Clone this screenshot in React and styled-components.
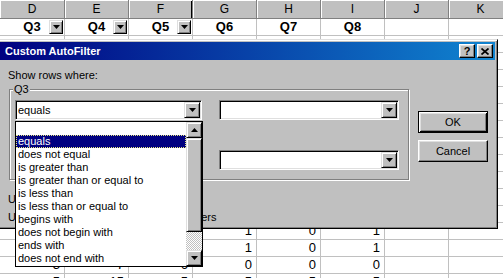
import React from "react";
import styled, { createGlobalStyle } from "styled-components";

const GlobalStyle = createGlobalStyle`
  html, body {
    margin: 0;
    padding: 0;
    background: #fff;
    overflow: hidden;
  }
  body {
    font-family: "Liberation Sans", Arial, sans-serif;
  }
`;

const Screen = styled.div`
  position: relative;
  width: 503px;
  height: 278px;
  overflow: hidden;
  background: #fff;
`;

/* ---------- worksheet ---------- */

const Sheet = styled.div`
  display: flex;
  flex-direction: column;
`;

const Row = styled.div`
  display: flex;
`;

const HeaderCell = styled.div`
  flex: 0 0 ${({ w }) => w}px;
  box-sizing: border-box;
  height: 19px;
  line-height: 18px;
  text-align: center;
  font-size: 12px;
  color: #000;
  background: #c0c0c0;
  border-right: 1px solid #808080;
  border-bottom: 1px solid #808080;
  box-shadow: ${({ active }) =>
    active ? "inset 1px 1px #fff, inset -1px 0 #000" : "inset 1px 1px #fff"};
`;

const Cell = styled.div`
  position: relative;
  flex: 0 0 ${({ w }) => w}px;
  box-sizing: border-box;
  height: 17px;
  line-height: 16px;
  padding: 0 4px;
  font-size: 13px;
  font-weight: ${({ bold }) => (bold ? 700 : 400)};
  text-align: ${({ align }) => align || "right"};
  color: #000;
  border-right: 1px solid #c0c0c0;
  border-bottom: 1px solid #c0c0c0;
  overflow: hidden;
  white-space: nowrap;
`;

const FilterButton = styled.div`
  position: absolute;
  right: 1px;
  top: 1px;
  width: 14px;
  height: 14px;
  box-sizing: border-box;
  display: flex;
  align-items: center;
  justify-content: center;
  background: #c0c0c0;
  border: 1px solid;
  border-color: #dfdfdf #000 #000 #dfdfdf;
  box-shadow: inset 1px 1px #fff, inset -1px -1px #808080;
`;

/* ---------- dialog ---------- */

const Dialog = styled.div`
  position: absolute;
  left: -3px;
  top: 39px;
  width: 501px;
  height: 190px;
  box-sizing: border-box;
  padding: 2px;
  background: #c0c0c0;
  border: 1px solid;
  border-color: #dfdfdf #000 #000 #dfdfdf;
  box-shadow: inset 1px 1px #fff, inset -1px -1px #808080;
  display: flex;
  flex-direction: column;
  font-size: 11px;
  color: #000;
`;

const TitleBar = styled.div`
  height: 18px;
  flex: 0 0 18px;
  display: flex;
  align-items: center;
  justify-content: space-between;
  padding: 0 2px 0 5px;
  background: linear-gradient(to right, #000080, #1084d0);
`;

const Title = styled.div`
  color: #fff;
  font-weight: 700;
  font-size: 11px;
`;

const TitleButtons = styled.div`
  display: flex;
  gap: 2px;
`;

const TitleButton = styled.div`
  width: 16px;
  height: 14px;
  box-sizing: border-box;
  display: flex;
  align-items: center;
  justify-content: center;
  background: #c0c0c0;
  border: 1px solid;
  border-color: #fff #000 #000 #fff;
  box-shadow: inset -1px -1px #808080, inset 1px 1px #dfdfdf;
  font-weight: 700;
  font-size: 11px;
  line-height: 12px;
`;

const Body = styled.div`
  flex: 1;
  display: flex;
  flex-direction: column;
  overflow: hidden;
`;

const Prompt = styled.div`
  margin: 9px 0 0 8px;
  line-height: 13px;
`;

const MainRow = styled.div`
  display: flex;
  align-items: flex-start;
  margin-top: 7px;
  padding-left: 9px;
`;

const GroupBox = styled.div`
  width: 400px;
  box-sizing: border-box;
  display: flex;
  flex-direction: column;
  align-items: flex-start;
  padding: 0 9px 9px 5px;
  border: 1px solid #808080;
  box-shadow: inset 1px 1px #fff, 1px 1px #fff;
`;

const Legend = styled.div`
  margin: -7px 0 0 -2px;
  padding: 0 1px;
  line-height: 13px;
  background: #c0c0c0;
`;

const CriteriaGrid = styled.div`
  margin-top: 4px;
  display: grid;
  grid-template-columns: 187px 180px;
  grid-template-rows: 20px 30px 20px;
  column-gap: 17px;
`;

const Combo = styled.div`
  box-sizing: border-box;
  height: 20px;
  display: flex;
  padding: 1px;
  background: #fff;
  border: 1px solid;
  border-color: #808080 #fff #fff #808080;
  box-shadow: inset 1px 1px #000, inset -1px -1px #dfdfdf;
`;

const ComboText = styled.div`
  flex: 1;
  padding-left: 1px;
  line-height: 16px;
  white-space: nowrap;
`;

const BevelButton = styled.div`
  flex: 0 0 16px;
  width: 16px;
  height: ${({ h }) => h || 16}px;
  box-sizing: border-box;
  display: flex;
  align-items: center;
  justify-content: center;
  background: #c0c0c0;
  border: 1px solid;
  border-color: #dfdfdf #000 #000 #dfdfdf;
  box-shadow: inset 1px 1px #fff, inset -1px -1px #808080;
`;

const RadioRow = styled.div`
  display: flex;
  align-items: center;
  gap: 28px;
  padding-left: 30px;
`;

const Radio = styled.label`
  display: flex;
  align-items: center;
  gap: 4px;
  &::before {
    content: "";
    width: 10px;
    height: 10px;
    border-radius: 50%;
    background: ${({ checked }) =>
      checked ? "radial-gradient(circle, #000 2px, #fff 2.5px)" : "#fff"};
    border: 1px solid #808080;
  }
`;

const ButtonCol = styled.div`
  display: flex;
  flex-direction: column;
  gap: 7px;
  margin: 22px 0 0 9px;
`;

const PushButton = styled.div`
  width: 70px;
  height: 22px;
  box-sizing: border-box;
  display: flex;
  align-items: center;
  justify-content: center;
  background: #c0c0c0;
  border: 1px solid;
  border-color: ${({ primary }) =>
    primary ? "#000" : "#fff #000 #000 #fff"};
  box-shadow: ${({ primary }) =>
    primary
      ? "inset 1px 1px #fff, inset -1px -1px #000, inset 2px 2px #dfdfdf, inset -2px -2px #808080"
      : "inset -1px -1px #808080, inset 1px 1px #dfdfdf"};
`;

const Notes = styled.div`
  margin: 10px 0 0 8px;
  line-height: 18px;
  white-space: nowrap;
`;

/* ---------- open drop-down list ---------- */

const DropList = styled.div`
  position: absolute;
  left: 15px;
  top: 121px;
  width: 188px;
  height: 146px;
  box-sizing: border-box;
  display: flex;
  background: #fff;
  border: 1px solid #000;
  font-size: 11px;
  color: #000;
`;

const Items = styled.div`
  flex: 1;
  display: flex;
  flex-direction: column;
`;

const Item = styled.div`
  height: 13px;
  line-height: 13px;
  padding-left: 2px;
  white-space: nowrap;
  background: ${({ selected }) => (selected ? "#000080" : "transparent")};
  color: ${({ selected }) => (selected ? "#fff" : "#000")};
  outline: ${({ selected }) => (selected ? "1px dotted #e8e880" : "none")};
  outline-offset: -1px;
`;

const ScrollBar = styled.div`
  flex: 0 0 16px;
  display: flex;
  flex-direction: column;
`;

const Thumb = styled.div`
  height: 94px;
  box-sizing: border-box;
  background: #c0c0c0;
  border: 1px solid;
  border-color: #dfdfdf #000 #000 #dfdfdf;
  box-shadow: inset 1px 1px #fff, inset -1px -1px #808080;
`;

const Track = styled.div`
  flex: 1;
  background-color: #c0c0c0;
  background-image: conic-gradient(#fff 25%, #c0c0c0 0 50%, #fff 0 75%, #c0c0c0 0);
  background-size: 2px 2px;
`;

const Arrow = ({ up }) => (
  <svg width="7" height="4" viewBox="0 0 7 4">
    <polygon points={up ? "3.5,0 7,4 0,4" : "0,0 7,0 3.5,4"} fill="#000" />
  </svg>
);

const CloseGlyph = () => (
  <svg width="8" height="7" viewBox="0 0 8 7">
    <path d="M0.5 0.5L7.5 6.5M7.5 0.5L0.5 6.5" stroke="#000" strokeWidth="1.7" />
  </svg>
);

const COLS = [
  { key: "D", w: 65 },
  { key: "E", w: 64 },
  { key: "F", w: 64 },
  { key: "G", w: 64 },
  { key: "H", w: 64 },
  { key: "I", w: 64 },
  { key: "J", w: 64 },
  { key: "K", w: 64 },
];

const LABELS = ["Q3", "Q4", "Q5", "Q6", "Q7", "Q8", "", ""];

const DATA = [
  [4, 12, 6, 1, 0, 1],
  [2, 9, 4, 0, 1, 0],
  [6, 14, 7, 1, 1, 1],
  [3, 8, 5, 0, 0, 1],
  [5, 11, 6, 1, 0, 0],
  [1, 6, 3, 0, 0, 0],
  [4, 10, 5, 1, 1, 0],
  [7, 16, 8, 1, 0, 1],
  [2, 5, 4, 0, 1, 1],
  [6, 13, 7, 1, 0, 0],
  [3, 9, 6, 0, 0, 1],
  [5, 12, 6, 1, 0, 1],
  [4, 10, 5, 1, 0, 1],
  [3, 7, 6, 0, 0, 0],
  [5, 15, 5, 5, 5, 5],
];

const OPERATORS = [
  "",
  "equals",
  "does not equal",
  "is greater than",
  "is greater than or equal to",
  "is less than",
  "is less than or equal to",
  "begins with",
  "does not begin with",
  "ends with",
  "does not end with",
];

export default () => {
  return (
    <Screen>
      <GlobalStyle />

      <Sheet>
        <Row>
          {COLS.map(({ key, w }) => (
            <HeaderCell key={key} w={w} active={key === "F"}>
              {key}
            </HeaderCell>
          ))}
        </Row>
        <Row>
          {COLS.map(({ key, w }, idx) => (
            <Cell key={key} w={w} bold align="center">
              {LABELS[idx]}
              {idx < 3 && (
                <FilterButton>
                  <Arrow />
                </FilterButton>
              )}
            </Cell>
          ))}
        </Row>
        {DATA.map((values, r) => (
          <Row key={r}>
            {COLS.map(({ key, w }, idx) => (
              <Cell key={key} w={w}>
                {values[idx]}
              </Cell>
            ))}
          </Row>
        ))}
      </Sheet>

      <Dialog>
        <TitleBar>
          <Title>Custom AutoFilter</Title>
          <TitleButtons>
            <TitleButton>?</TitleButton>
            <TitleButton>
              <CloseGlyph />
            </TitleButton>
          </TitleButtons>
        </TitleBar>

        <Body>
          <Prompt>Show rows where:</Prompt>
          <MainRow>
            <GroupBox>
              <Legend>Q3</Legend>
              <CriteriaGrid>
                <Combo>
                  <ComboText>equals</ComboText>
                  <BevelButton>
                    <Arrow />
                  </BevelButton>
                </Combo>
                <Combo>
                  <ComboText />
                  <BevelButton>
                    <Arrow />
                  </BevelButton>
                </Combo>
                <RadioRow>
                  <Radio checked>And</Radio>
                  <Radio>Or</Radio>
                </RadioRow>
                <div />
                <Combo>
                  <ComboText />
                  <BevelButton>
                    <Arrow />
                  </BevelButton>
                </Combo>
                <Combo>
                  <ComboText />
                  <BevelButton>
                    <Arrow />
                  </BevelButton>
                </Combo>
              </CriteriaGrid>
            </GroupBox>
            <ButtonCol>
              <PushButton primary>OK</PushButton>
              <PushButton>Cancel</PushButton>
            </ButtonCol>
          </MainRow>
          <Notes>
            Use ? to represent any single character
            <br />
            Use * to represent any series of characters
          </Notes>
        </Body>
      </Dialog>

      <DropList>
        <Items>
          {OPERATORS.map((op, idx) => (
            <Item key={idx} selected={op === "equals"}>
              {op}
            </Item>
          ))}
        </Items>
        <ScrollBar>
          <BevelButton>
            <Arrow up />
          </BevelButton>
          <Thumb />
          <Track />
          <BevelButton>
            <Arrow />
          </BevelButton>
        </ScrollBar>
      </DropList>
    </Screen>
  );
};
